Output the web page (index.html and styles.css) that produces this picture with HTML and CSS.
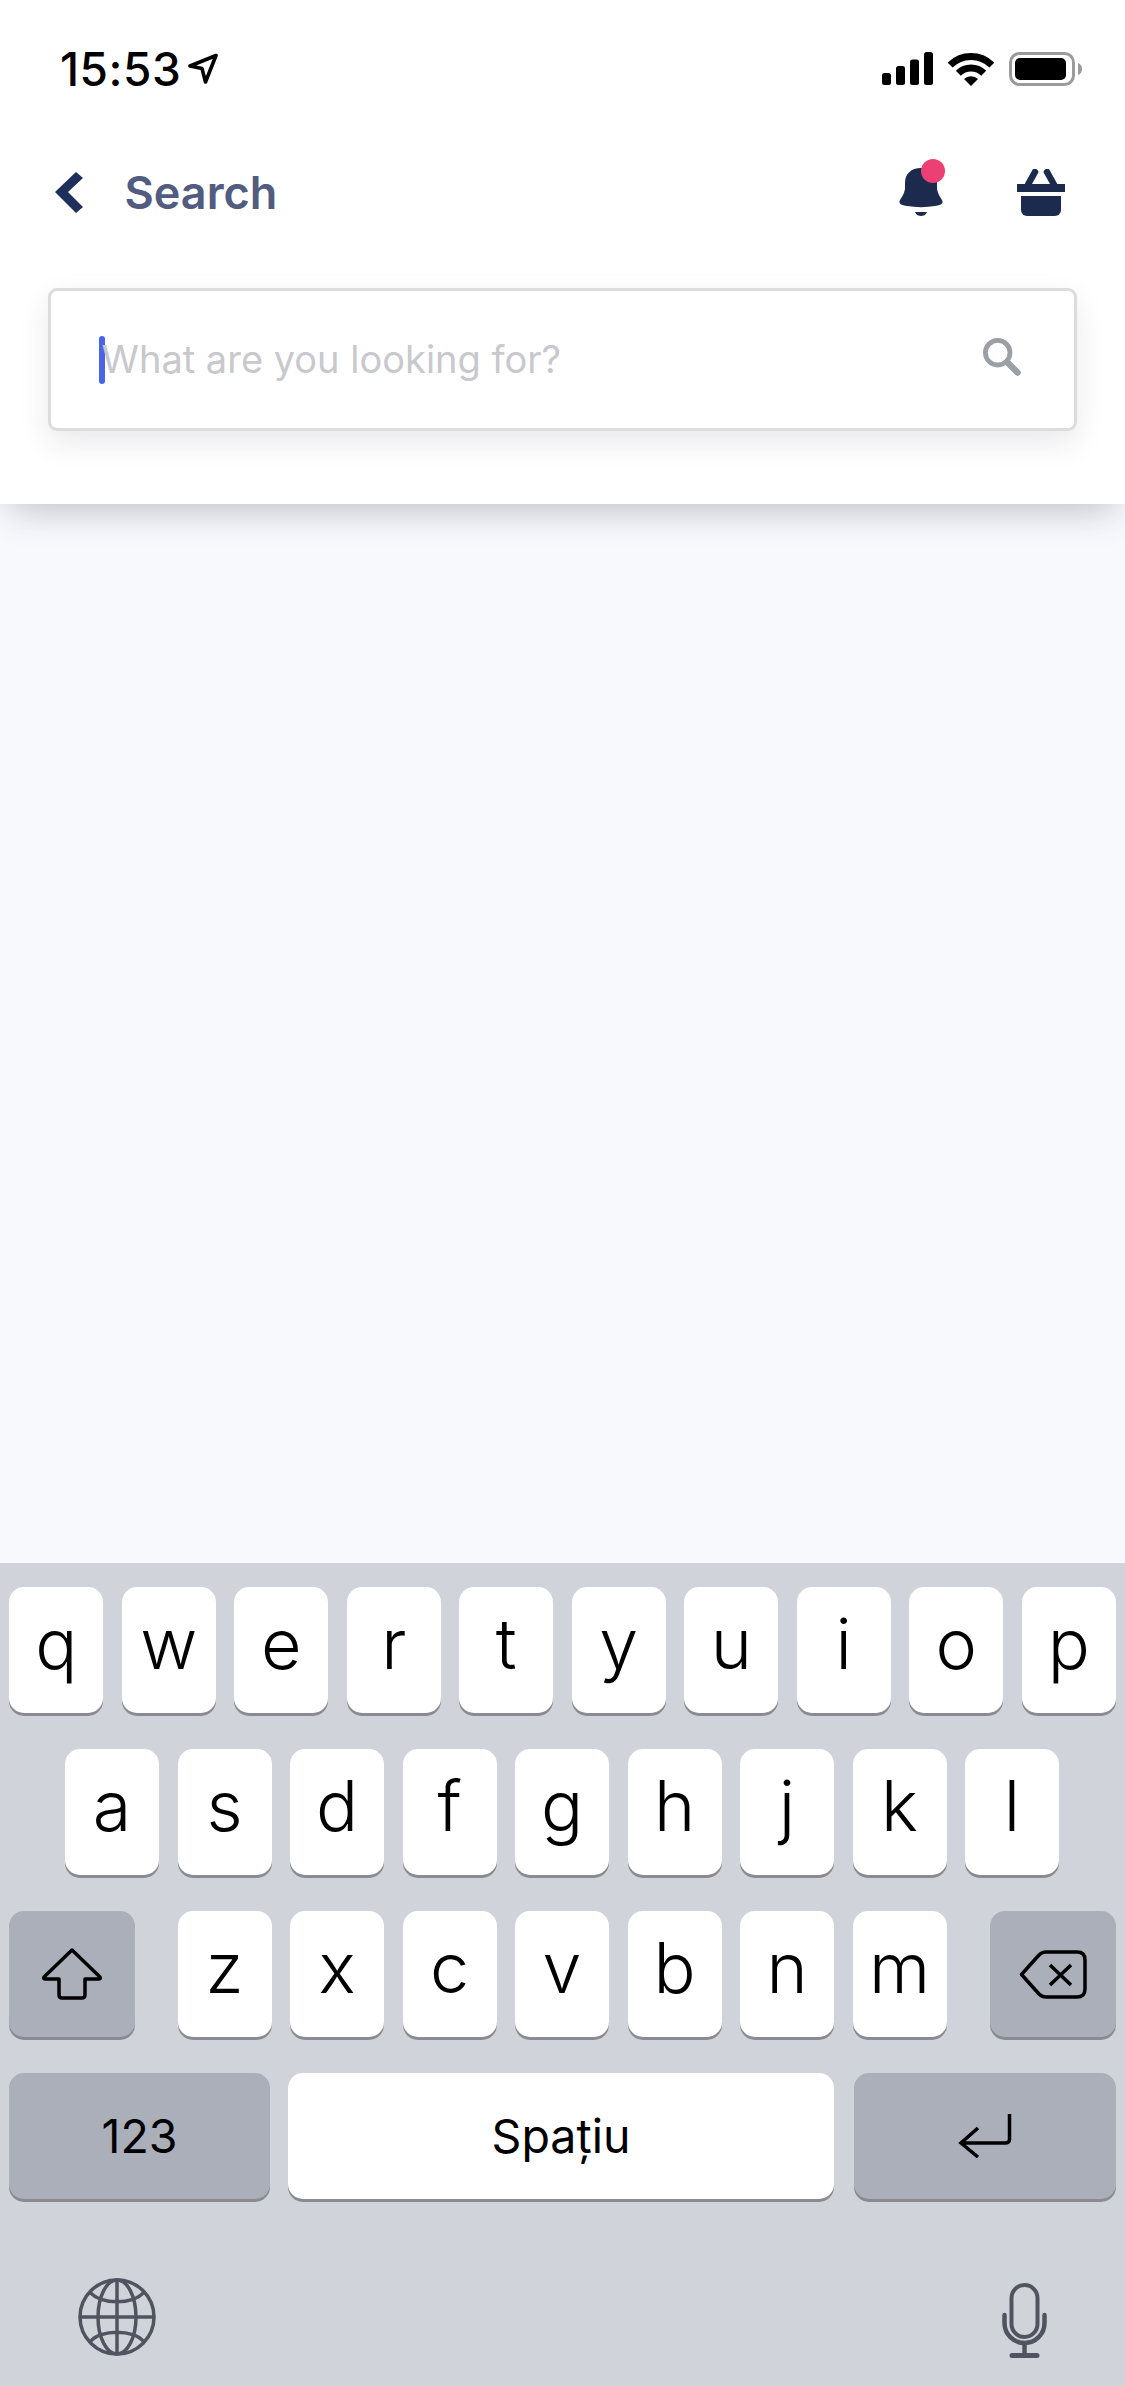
FILE: index.html
```html
<!DOCTYPE html>
<html lang="ro">
<head>
    <meta charset="UTF-8">
    <meta name="viewport" content="width=device-width, initial-scale=1.0">
    <title>Search</title>
    <link rel="stylesheet" href="styles.css">
</head>
<body>
    <div id="screen">
        <header class="top">
            <div class="status-bar">
                <div class="status-left">
                    <span class="time">15:53</span>
                    <svg class="loc" width="30" height="32" viewBox="0 0 30 32"><path d="M28 2.500 2 13 14 15.500 17.500 29Z" fill="none" stroke="#000" stroke-width="3.600" stroke-linejoin="round"/></svg>
                </div>
                <div class="status-right">
                    <svg width="51" height="33" viewBox="0 0 51 33"><rect x="0" y="21" width="9" height="12" rx="2.500"/><rect x="14" y="14" width="9" height="19" rx="2.500"/><rect x="28" y="7.500" width="9" height="25.500" rx="2.500"/><rect x="42" y="0" width="9" height="33" rx="2.500"/></svg>
                    <svg width="46" height="34" viewBox="0 0 46 34"><path d="M2.100 13.100A29.500 29.500 0 0 1 43.900 13.100M10.300 21.300A18 18 0 0 1 35.700 21.300" fill="none" stroke="#000" stroke-width="7"/><path d="M23 34 16 27A10 10 0 0 1 30 27Z"/></svg>
                    <svg width="73" height="34" viewBox="0 0 73 34"><rect x="1.500" y="1.500" width="63" height="31" rx="9" fill="none" stroke="#9b9b9b" stroke-width="3"/><rect x="6" y="6" width="51" height="22" rx="5"/><path d="M69 11C72 12 73 14.500 73 17S72 22 69 23Z" fill="#9b9b9b"/></svg>
                </div>
            </div>

            <div class="nav">
                <svg class="back" width="28" height="41" viewBox="0 0 28 41"><path d="M0 20 21 0 28 6 13 20 28 35 21 41Z" fill="#1f2f5c"/></svg>
                <span class="nav-title">Search</span>
                <svg class="bell" width="46" height="58" viewBox="0 0 46 58"><path d="M22 10C12 10 6 16 6 25V31C5 36 3 39 1 42 -1 46 3 47 8 48 17 49.500 27 49.500 36 48 41 47 45 46 43 42 41 39 39 36 38 31V25C38 16 32 10 22 10Z" fill="#1c2a4e"/><path d="M16 54H28C27 57 24 58 22 58S17 57 16 54Z" fill="#1c2a4e"/><circle cx="34" cy="13" r="12" fill="#ec3f73"/></svg>
                <svg class="basket" width="48" height="47" viewBox="0 0 48 47"><path d="M11.300 15 18 3M36.700 15 30 3" stroke="#1c2a4e" stroke-width="6.500" stroke-linecap="round" fill="none"/><rect x="0" y="15" width="48" height="8" fill="#1c2a4e"/><path d="M4 27H44V41A6 6 0 0 1 38 47H10A6 6 0 0 1 4 41Z" fill="#1c2a4e"/></svg>
            </div>

            <div class="search-box">
                <span class="caret"></span>
                <span class="placeholder">What are you looking for?</span>
                <svg class="search-icon" width="38" height="38" viewBox="0 0 38 38"><circle cx="14.700" cy="14.700" r="12.300" fill="none" stroke="#9ba0a6" stroke-width="4.800"/><path d="M24 24 34.500 34.500" stroke="#9ba0a6" stroke-width="6.500" stroke-linecap="round"/></svg>
            </div>
        </header>

        <main class="content"></main>

        <section class="keyboard">
            <div class="row">
                <div class="key">q</div><div class="key">w</div><div class="key">e</div><div class="key">r</div><div class="key">t</div><div class="key">y</div><div class="key">u</div><div class="key">i</div><div class="key">o</div><div class="key">p</div>
            </div>
            <div class="row row-home">
                <div class="key">a</div><div class="key">s</div><div class="key">d</div><div class="key">f</div><div class="key">g</div><div class="key">h</div><div class="key">j</div><div class="key">k</div><div class="key">l</div>
            </div>
            <div class="row row-split">
                <div class="key key-fn key-side">
                    <svg width="62" height="55" viewBox="0 0 62 55"><path d="M31 3 3 30Q2 32 4 32H18V48Q18 51 21 51H41Q44 51 44 48V32H58Q60 32 59 30Z" fill="none" stroke="#000" stroke-width="3.500" stroke-linejoin="round"/></svg>
                </div>
                <div class="letters">
                    <div class="key">z</div><div class="key">x</div><div class="key">c</div><div class="key">v</div><div class="key">b</div><div class="key">n</div><div class="key">m</div>
                </div>
                <div class="key key-fn key-side">
                    <svg width="68" height="49" viewBox="0 0 68 49"><path d="M2.500 24.500 20 5Q23 2 27 2H58Q66 2 66 10V39Q66 47 58 47H27Q23 47 20 44ZM31 15 52 35M52 15 31 35" fill="none" stroke="#000" stroke-width="3.500" stroke-linejoin="round"/></svg>
                </div>
            </div>
            <div class="row row-split">
                <div class="key key-fn key-wide key-label">123</div>
                <div class="key key-space key-label">Spațiu</div>
                <div class="key key-fn key-wide key-return">
                    <svg width="54" height="44" viewBox="0 0 54 44"><path d="M51.500 0V25Q51.500 29 47 29H3M20 14 3 29 20 43" fill="none" stroke="#000" stroke-width="3.500"/></svg>
                </div>
            </div>
            <div class="kb-bottom">
                <svg width="78" height="78" viewBox="0 0 78 78"><g fill="none" stroke="#50545f" stroke-width="3.500"><circle cx="39" cy="39" r="37"/><ellipse cx="39" cy="39" rx="19" ry="37"/><path d="M39 2V76M2 39H76M12 14C22 27 56 27 66 14M12 64C22 51 56 51 66 64"/></g></svg>
                <svg class="mic" width="45" height="75" viewBox="0 0 45 75"><g fill="none" stroke="#50545f"><rect x="9.500" y="2" width="26" height="52" rx="13" stroke-width="4"/><path d="M2.500 32V40A20 20 0 0 0 42.500 40V32" stroke-width="4.500" stroke-linecap="round"/><path d="M22.500 60V71" stroke-width="4.500"/><path d="M10 72.500H35" stroke-width="5" stroke-linecap="round"/></g></svg>
            </div>
        </section>
    </div>
</body>
</html>
```

FILE: styles.css
```css
html, body {
    margin: 0;
    padding: 0;
}
body {
    font-family: Inter, "Noto Sans", sans-serif;
    background-color: #f8f9fd;
}
#screen {
    width: 1125px;
    height: 2386px;
    display: flex;
    flex-direction: column;
    overflow: hidden;
}
.top {
    position: relative;
    z-index: 1;
    height: 504px;
    box-sizing: border-box;
    background-color: #fff;
    box-shadow: 0 14px 36px -10px rgba(40, 44, 60, 0.3);
}
.status-bar {
    height: 132px;
    box-sizing: border-box;
    padding: 52px 43px 0 60px;
    display: flex;
    justify-content: space-between;
    align-items: flex-start;
}
.status-left {
    display: flex;
    align-items: center;
    height: 34px;
    gap: 7px;
}
.time {
    font-size: 46px;
    font-weight: 500;
    letter-spacing: 0.500px;
    line-height: 34px;
    color: #000;
}
.status-right {
    display: flex;
    align-items: flex-start;
    gap: 15px;
}
.nav {
    height: 122px;
    box-sizing: border-box;
    padding: 26px 60px 0 55px;
    display: flex;
    align-items: flex-start;
}
.back {
    margin-top: 14px;
}
.nav-title {
    margin-left: 41.500px;
    font-size: 45px;
    font-weight: 600;
    line-height: 70px;
    color: #525c80;
}
.bell {
    margin-left: auto;
}
.basket {
    margin-left: 72px;
    margin-top: 11px;
}
.search-box {
    margin: 34px 48px 0 48px;
    height: 143px;
    box-sizing: border-box;
    border: 3px solid #dcdcdc;
    border-radius: 9px;
    padding: 0 53px 0 48px;
    display: flex;
    align-items: center;
    background-color: #fff;
    box-shadow: 0 12px 30px rgba(40, 44, 60, 0.1);
}
.caret {
    width: 6px;
    height: 48px;
    border-radius: 3px;
    background-color: #4a63e7;
    flex-shrink: 0;
}
.placeholder {
    margin-left: -3.500px;
    margin-top: -2px;
    font-size: 38px;
    color: #c8c8cd;
}
.search-icon {
    margin-left: auto;
    margin-top: -5px;
}
.content {
    flex: 1;
    background-color: #f8f9fd;
}
.keyboard {
    height: 823px;
    box-sizing: border-box;
    padding-top: 24px;
    background-color: #d1d3db;
    display: flex;
    flex-direction: column;
    gap: 36px;
}
.row {
    display: flex;
    justify-content: center;
    gap: 18.500px;
}
.row-home {
    padding-right: 1px;
}
.row-split {
    justify-content: space-between;
    padding: 0 9px;
    gap: 0;
}
.letters {
    display: flex;
    gap: 18.500px;
    margin-right: 1px;
}
.key {
    width: 94px;
    height: 126px;
    box-sizing: border-box;
    padding-bottom: 14px;
    border-radius: 15px;
    background-color: #fff;
    box-shadow: 0 3px 0 #8a8b91;
    display: flex;
    align-items: center;
    justify-content: center;
    font-size: 70px;
    font-weight: 350;
    color: #000;
}
.key-fn {
    background-color: #abafba;
    padding-bottom: 0;
}
.key-side {
    width: 126px;
}
.key-wide {
    width: 261px;
}
.key-return {
    width: 262px;
}
.key-space {
    width: 546px;
    margin-right: 2px;
    padding-bottom: 0;
}
.key-label {
    font-size: 46.500px;
    font-weight: 400;
}
.kb-bottom {
    display: flex;
    justify-content: space-between;
    align-items: flex-start;
    padding: 43px 78px 0 78px;
}
.mic {
    margin-top: 5px;
}
```
